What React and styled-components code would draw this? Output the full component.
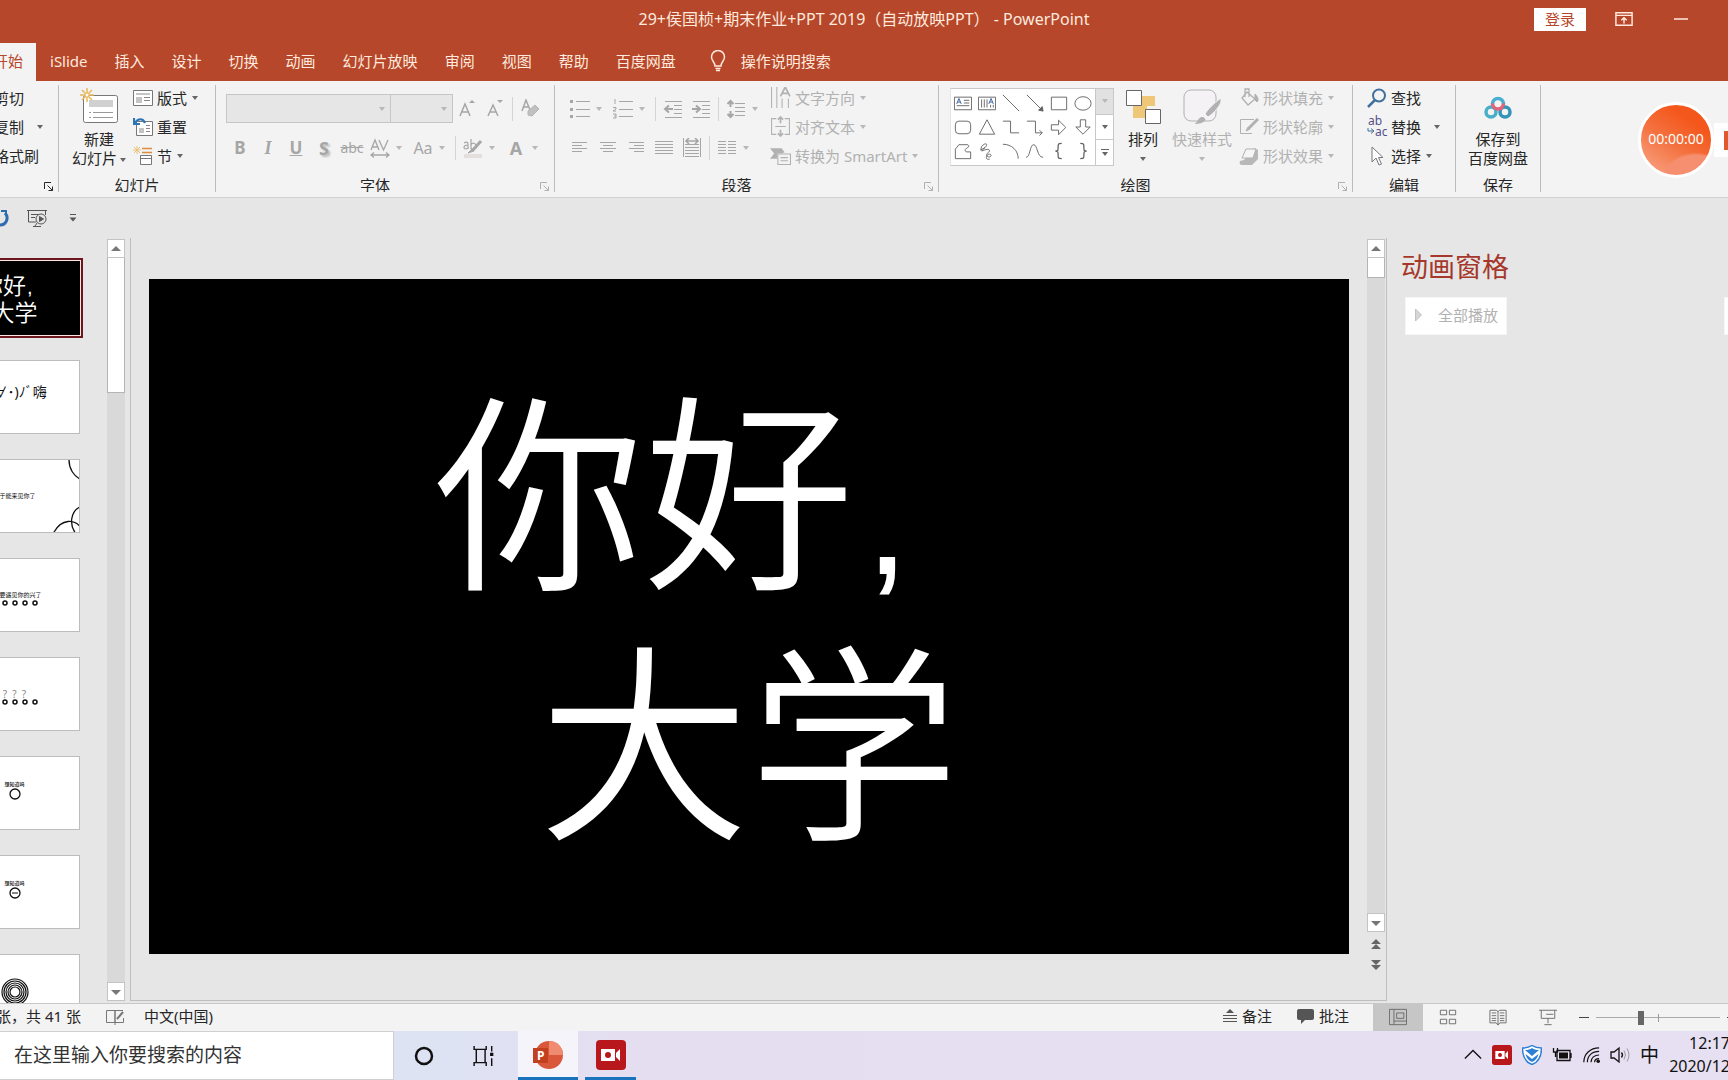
import React, { useState } from 'react'
import styled, { createGlobalStyle, css } from 'styled-components'

const GlobalStyle = createGlobalStyle`
  * { box-sizing: border-box; }
  body { margin: 0; overflow: hidden; }
  body, button, input, select {
    font-family: 'Noto Sans', 'Noto Sans CJK SC', sans-serif;
    font-size: 15px;
    line-height: 20px;
    color: #262626;
  }
  button {
    border: 0;
    padding: 0;
    background: none;
    white-space: nowrap;
  }
  button:disabled { color: #b1b1b1; }
  ul, h1, h2, p { margin: 0; padding: 0; }
  h1, h2 { font-weight: normal; }
  li { list-style: none; }
`

const Icon = styled.svg.attrs(({ viewBox }) => ({ viewBox: viewBox || '0 0 20 20', 'aria-hidden': true }))`
  flex: none;
  width: ${({ $w }) => $w || 20}px;
  height: ${({ $h, $w }) => $h || $w || 20}px;
  fill: none;
  stroke: currentColor;
  display: block;
`

const Caret = styled.span`
  flex: none;
  display: inline-block;
  vertical-align: middle;
  border: 3px solid transparent;
  border-top: 4px solid ${({ $pale }) => $pale ? '#b8b8b8' : '#666'};
  border-bottom: 0;
`

const LowCaret = styled(Caret)`
  margin-top: 8px;
`

/* ---------- window frame ---------- */

const Window = styled.div`
  height: 100vh;
  display: flex;
  flex-direction: column;
  overflow: hidden;
  position: relative;
  background: #e6e6e6;
`

const Header = styled.header`
  flex: none;
  background: #b7472a;
  color: #fdeadf;
`

const TitleBar = styled.div`
  display: grid;
  grid-template-columns: 1fr auto 1fr;
  align-items: center;
  height: 38px;
  h1 {
    grid-column: 2;
    font-size: 16px;
    white-space: pre;
  }
`

const WindowButtons = styled.div`
  display: flex;
  align-items: center;
  justify-content: flex-end;
  padding-right: 40px;
  button { color: #fdeadf; }
`

const LoginButton = styled.button`
  && { color: #b7472a; }
  background: #fff;
  height: 23px;
  padding: 0 11px;
  margin-right: 29px;
`

const Minimize = styled.button`
  margin-left: 41px;
`

const Tabs = styled.nav`
  display: flex;
  gap: 1px;
  height: 43px;
  padding-top: 5px;
  margin-left: -20px;
`

const Tab = styled.button`
  display: flex;
  align-items: center;
  padding: 0 13px 2px;
  color: ${({ $active }) => $active ? '#b7472a' : '#fdeadf'};
  background: ${({ $active }) => $active ? '#f3f3f3' : 'none'};
`

const TellMe = styled(Tab)`
  margin-left: 7px;
  gap: 15px;
`

const Ribbon = styled.div`
  flex: none;
  display: flex;
  padding: 4px 0 5px;
  background: #f3f3f3;
  border-bottom: 1px solid #d0d0d0;
`

const GroupBox = styled.section`
  flex: none;
  display: flex;
  flex-direction: column;
  width: ${({ $width }) => $width}px;
  border-right: 1px solid #bdbdbd;
`

const GroupBody = styled.div`
  display: flex;
  height: 87px;
  padding-left: ${({ $pad }) => $pad || 0}px;
  justify-content: ${({ $justify }) => $justify || 'flex-start'};
`

const GroupFooter = styled.div`
  display: flex;
  height: 20px;
  overflow: hidden;
  h2 {
    flex: 1;
    font-size: 15px;
    line-height: 26px;
    text-align: center;
  }
  button { width: 20px; padding: 10px 0 0 6px; }
`

const Stack = styled.div`
  display: flex;
  flex-direction: column;
  align-items: flex-start;
  margin-left: ${({ $ml }) => $ml || 0}px;
`

const SmallButton = styled.button`
  display: flex;
  align-items: center;
  gap: 4px;
  height: 29px;
  padding-bottom: 4px;
  ${Caret} { margin-left: ${({ $far }) => $far ? 9 : 1}px; }
`

const BigButton = styled.button`
  display: flex;
  flex-direction: column;
  align-items: center;
  min-width: 58px;
  height: 87px;
  padding-top: 3px;
  line-height: 19px;
  > svg { margin-bottom: 6px; }
  span > ${Caret} { margin-left: 3px; }
`

const ToolRow = styled.div`
  display: flex;
  align-items: center;
  height: 39px;
  &:first-child { margin-top: 4px; }
`

const Tool = styled.button`
  flex: none;
  display: flex;
  align-items: center;
  justify-content: center;
  width: 28px;
  height: 28px;
  font-size: ${({ $size }) => $size || 17}px;
  font-weight: ${({ $bold }) => $bold ? 700 : 400};
  &:disabled { color: #a6a6a6; }
  ${({ $split }) => $split && css`
    width: 43px;
    padding-right: 5px;
    justify-content: flex-start;
    > :first-child { width: 28px; text-align: center; }
    ${Caret} { margin-left: 2px; }
  `}
`

const ToolIconBox = styled.span`
  display: flex;
  justify-content: center;
`

const Rule = styled.span`
  width: 1px;
  height: 24px;
  margin: 0 3px;
  background: #d4d4d4;
`

const Combo = styled.div`
  display: flex;
  align-items: center;
  width: ${({ $width }) => $width}px;
  height: 29px;
  padding-right: 5px;
  background: #e6e6e6;
  border: 1px solid #c6c6c6;
  & + & { border-left-width: 0; }
  select {
    flex: 1;
    min-width: 0;
    appearance: none;
    border: 0;
    background: none;
  }
`

const Italic = styled.em`
  font-family: 'Liberation Serif', serif;
  font-weight: 700;
  font-size: 18px;
`

const Shadowed = styled.span`
  text-shadow: 2px 2px 2px #bbb;
`

const ClipStack = styled(Stack)`
  width: 39px;
  align-items: flex-end;
  ${SmallButton}:not(:last-child) { margin-right: 15px; }
  ${SmallButton}:nth-child(2) { margin-right: -4px; }
`

const ReplaceIcon = styled(Icon)`
  overflow: visible;
  text {
    font-size: 12px;
    fill: #55508a;
    stroke: none;
  }
`

/* ---------- shapes gallery ---------- */

const Gallery = styled.div`
  display: flex;
  align-self: flex-start;
  margin-top: 3px;
  height: 78px;
  background: #fff;
  border: 1px solid #c8c8c8;
  border-left-color: #e4e4e4;
`

const Shapes = styled.div`
  display: grid;
  grid-template-columns: repeat(6, 24px);
  grid-auto-rows: 24px;
  padding-top: 2px;
  color: #5f5f5f;
  button {
    display: grid;
    place-items: center;
    color: inherit;
  }
`

const GalleryScroll = styled.div`
  display: flex;
  flex-direction: column;
  width: 18px;
  border-left: 1px solid #c8c8c8;
  button {
    flex: 1;
    display: flex;
    flex-direction: column;
    align-items: center;
    justify-content: center;
    gap: 2px;
  }
  button:first-child { background: #e1e1e1; }
  button + button { border-top: 1px solid #c8c8c8; }
  i { width: 8px; height: 1px; background: #666; }
`

/* ---------- recorder widget floating over the ribbon ---------- */

const Recorder = styled.div`
  position: absolute;
  top: 102px;
  right: 0;
  display: flex;
  align-items: center;
`

const RecorderTime = styled.button`
  width: 76px;
  height: 76px;
  border: 3px solid #fff;
  border-radius: 50%;
  padding-bottom: 3px;
  color: #fff;
  font-size: 14px;
  background:
    radial-gradient(circle at 78% 125%, #f68f70 0 36%, transparent 39%),
    linear-gradient(215deg, #f4571c 25%, #f4713f 55%, #f9a98c 100%);
`

const RecorderStop = styled.button`
  display: flex;
  align-items: center;
  justify-content: flex-end;
  width: 14px;
  height: 34px;
  background: #fff;
  &::after {
    content: '';
    width: 4px;
    height: 19px;
    background: #e0582c;
  }
`

/* ---------- work area ---------- */

const QuickAccess = styled.div`
  flex: none;
  display: flex;
  align-items: center;
  gap: 18px;
  height: 40px;
  margin-left: -11px;
  color: #555;
  button { color: inherit; }
`

const Main = styled.main`
  flex: 1;
  min-height: 0;
  display: flex;
`

const ThumbPane = styled.ul`
  flex: none;
  width: 107px;
  display: flex;
  flex-direction: column;
  align-items: flex-end;
  gap: 25px;
  padding: 23px 27px 0 0;
  overflow: hidden;
`

const Thumb = styled.button`
  position: relative;
  display: flex;
  flex-direction: column;
  align-items: center;
  justify-content: center;
  width: 131px;
  height: 74px;
  overflow: hidden;
  background: #fff;
  border: 1px solid #bdbdbd;
  color: #111;
  font-size: ${({ $size }) => $size || 6}px;
  line-height: ${({ $size }) => $size ? $size + 4 : 8}px;
  padding-bottom: ${({ $lift }) => $lift || 0}px;
  ${({ $selected }) => $selected && css`
    border: 0;
    color: #fff;
    background: #000;
    font-family: 'Noto Sans CJK SC', sans-serif;
    font-weight: 350;
    box-shadow: 0 0 0 1px #fbe4e4, 0 0 0 3px #6d161d;
  `}
`

const CaptionThumb = styled(Thumb)`
  font-size: 5px;
  font-weight: 500;
  padding-bottom: 18px;
`

const ThumbArt = styled(Icon)`
  position: absolute;
  inset: 0;
`

const Questions = styled.span`
  font-size: 10px;
  line-height: 12px;
  color: #888;
  white-space: pre;
`

const ScrollBar = styled.div`
  flex: none;
  display: flex;
  flex-direction: column;
  width: 18px;
  margin: 1px 0 ${({ $bottom }) => $bottom}px;
  background: #d9d9d9;
  color: #777;
`

const ScrollArrow = styled.button`
  flex: none;
  display: grid;
  place-items: center;
  height: 19px;
  background: #fff;
  border: 1px solid #c4c4c4;
  color: inherit;
`

const ScrollThumb = styled.div`
  height: ${({ $height }) => $height}px;
  margin-bottom: auto;
  background: #fff;
  border: 1px solid #b4b4b4;
  border-top: 0;
`

const Editor = styled.div`
  flex: 1;
  min-width: 0;
  display: flex;
  margin: 0 0 2px 5px;
  border: solid #bebebe;
  border-width: 0 1px 1px;
`

const Canvas = styled.div`
  flex: 1;
  min-width: 0;
  padding: 41px 18px 0;
`

const Slide = styled.div`
  display: flex;
  align-items: center;
  justify-content: center;
  aspect-ratio: 16 / 9;
  padding-bottom: 20px;
  background: #000;
  color: #fff;
  font-family: 'Noto Sans CJK SC', sans-serif;
  font-size: 210px;
  font-weight: 350;
  line-height: 250px;
  text-align: center;
  white-space: nowrap;
`

// full-width cell with a narrow straight comma in it
const Comma = styled.span`
  display: inline-block;
  width: ${({ $cell }) => $cell}px;
  padding-left: ${({ $lead }) => $lead || 0}px;
  font-family: 'Liberation Sans', sans-serif;
  font-size: ${({ $size }) => $size}px;
  line-height: 1;
  text-align: left;
`

const SlideNav = styled.div`
  flex: none;
  display: flex;
  flex-direction: column;
  margin-right: 1px;
  > ${ScrollBar} { flex: 1; }
`

const SlideStep = styled.div`
  display: flex;
  flex-direction: column;
  align-items: center;
  gap: 3px;
  padding-bottom: 26px;
  button { height: 18px; color: #666; }
`

const AnimationPane = styled.aside`
  flex: none;
  width: 341px;
  padding: 11px 0 0 14px;
  h2 {
    font-size: 27px;
    line-height: 36px;
    color: #a5382a;
  }
`

const PaneButtons = styled.div`
  display: flex;
  justify-content: space-between;
  margin: 12px -36px 0 4px;
`

const PaneButton = styled.button`
  display: flex;
  align-items: center;
  gap: 14px;
  min-width: 40px;
  height: 38px;
  padding: 0 8px 2px;
  background: #fff;
  border: 1px solid #f6f6f6;
`

/* ---------- status bar ---------- */

const StatusBar = styled.footer`
  flex: none;
  display: flex;
  align-items: center;
  height: 28px;
  overflow: hidden;
  background: #f3f3f3;
  border-top: 1px solid #c8c8c8;
  white-space: nowrap;
`

const StatusSide = styled.div`
  display: flex;
  align-items: center;
  padding-bottom: 3px;
  & + & {
    margin-left: auto;
    margin-right: 24px;
  }
`

const SlideCount = styled.p`
  width: 81px;
  display: flex;
  justify-content: flex-end;
  margin-right: 24px;
`

const StatusButton = styled.button`
  display: flex;
  align-items: center;
  gap: 5px;
  margin-left: ${({ $ml }) => $ml || 0}px;
`

const ViewButton = styled.button`
  display: grid;
  place-items: center;
  width: 50px;
  height: 28px;
  padding-bottom: 1px;
  color: #666;
  background: ${({ $active }) => $active ? '#c6c6c6' : 'none'};
`

const Zoom = styled.div`
  display: flex;
  align-items: center;
  gap: 7px;
  margin: 0 -9px 0 6px;
  button { width: 10px; color: #444; }
  input {
    appearance: none;
    width: 124px;
    height: 14px;
    margin: 0;
    background:
      linear-gradient(#999, #999) 50% 50% / 1px 8px no-repeat,
      linear-gradient(#aaa, #aaa) 0 50% / 100% 1px no-repeat;
  }
  input::-webkit-slider-thumb {
    appearance: none;
    width: 6px;
    height: 14px;
    background: #666;
  }
`

/* ---------- taskbar ---------- */

const TaskBar = styled.div`
  flex: none;
  display: flex;
  height: 49px;
  overflow: hidden;
  background: linear-gradient(90deg, #dde3f3 25%, #e5def1 36%, #e6e0f2);
`

const SearchBox = styled.input`
  width: 394px;
  padding: 0 14px 2px;
  border: 1px solid #cfcfcf;
  border-left: 0;
  background: #fff;
  font-size: 19px;
  &::placeholder { color: #333; opacity: 1; }
`

const TaskButton = styled.button`
  display: grid;
  place-items: center;
  width: ${({ $width }) => $width || 60}px;
  color: #111;
  background: ${({ $active }) => $active ? '#f5f4fa' : 'none'};
  border-bottom: ${({ $open }) => $open ? '3px solid #1a74bd' : '0'};
  padding-top: ${({ $open }) => $open ? 1 : 0}px;
  margin-right: ${({ $mr }) => $mr || 0}px;
`

const Tray = styled.div`
  flex: 1;
  display: flex;
  align-items: center;
  justify-content: flex-end;
  gap: 10px;
  padding-bottom: 2px;
  color: #111;
  span { font-size: 19px; }
`

const Clock = styled.time`
  font-size: 16px;
  line-height: 23px;
  text-align: right;
  margin-right: -2px;
`

const Launcher = ({ off }) => (
  <button aria-label="对话框启动器" disabled={off}>
    <Icon $w={10} viewBox="0 0 10 10">
      <path d="M.5 7V.5H7M3.500 3.500l5 5M8.500 4.500v4h-4" />
    </Icon>
  </button>
)

const Group = ({ title, width, pad, justify, launcher, children }) => (
  <GroupBox $width={width}>
    <GroupBody $pad={pad} $justify={justify}>{children}</GroupBody>
    <GroupFooter>
      <h2>{title}</h2>
      {launcher && <Launcher off={launcher === 'off'} />}
    </GroupFooter>
  </GroupBox>
)

function ToolIcon({ label, split, children }) {
  return (
    <Tool disabled aria-label={label} $split={split}>
      <ToolIconBox><Icon>{children}</Icon></ToolIconBox>
      {split && <Caret $pale />}
    </Tool>
  )
}

const shapes = [
  ['文本框', <><path d="M.5 3.500h19v14H.5zM11 7h6M11 10h6M3 13h14" /><path d="M3 11l2.500-6L8 11M4 9h3" stroke="#2b579a" /></>],
  ['竖排文本框', <><path d="M.5 3.500h19v14H.5zM4 6v9M7 6v9M10 6v9M14 12v3M17 12v3" /><path d="M12 11l2.500-6 2.500 6M13 9h3" stroke="#2b579a" /></>],
  ['直线', <path d="M1 1l18 18" />],
  ['箭头', <><path d="M1 1l17 17" /><path d="M19 19l-5-1 4-4z" fill="currentColor" /></>],
  ['矩形', <path d="M1.500 3.500h17v14h-17z" />],
  ['椭圆', <ellipse cx="10" cy="10.500" rx="9" ry="7.500" />],
  ['圆角矩形', <rect x="1.500" y="3.500" width="17" height="14" rx="4" />],
  ['三角形', <path d="M10 2l8.500 16h-17z" />],
  ['肘形连接符', <path d="M1 3.500h8.500v13H19" />],
  ['肘形箭头', <path d="M1 3.500h9.500v13H18M15 13.500l3 3-3 3" />],
  ['右箭头', <path d="M1.500 7.500h8v-5l8 8-8 8v-5h-8z" />],
  ['下箭头', <path d="M7 2h6v8h5l-8 8-8-8h5z" />],
  ['任意多边形', <path d="M1.500 18.500V8l4-5h9c3 0 2 3-.5 4s-2 4 .5 4h4v7.500z" />],
  ['自由曲线', <path d="M4 5c4-5 8-3 4 1s-6 5-1 3 8 0 4 3 1 6 3 4-2-4-4-1 0 5 3 4M4 5l-1 4 5-3" />],
  ['弧形', <path d="M1 2.500c10 0 17 7 17 16" />],
  ['曲线', <path d="M0 17C5 17 4 3 8.500 3S12 17 19 17" />],
  ['左大括号', <path strokeWidth="1.400" d="M13 1.500c-4 0-4 1-4 4.500s0 4-3 4c3 0 3 1 3 4.500s0 4 4 4" />],
  ['右大括号', <path strokeWidth="1.400" d="M7 1.500c4 0 4 1 4 4.500s0 4 3 4c-3 0-3 1-3 4.500s0 4-4 4" />],
]

const tabs = ['开始', 'iSlide', '插入', '设计', '切换', '动画', '幻灯片放映', '审阅', '视图', '帮助', '百度网盘']

function TopBar() {
  const [active, setActive] = useState('开始')
  return (
    <Header>
      <TitleBar>
        <h1>29+侯国桢+期末作业+PPT 2019（自动放映PPT） - PowerPoint</h1>
        <WindowButtons>
          <LoginButton>登录</LoginButton>
          <button aria-label="功能区显示选项">
            <Icon $w={18}>
              <path strokeWidth="1.600" d="M1 3h18v14H1zM1 6h18M10 15V9M7 11.500l3-3 3 3" />
            </Icon>
          </button>
          <Minimize aria-label="最小化">
            <Icon $w={14} viewBox="0 0 14 14"><path strokeWidth="1.500" d="M0 7h14" /></Icon>
          </Minimize>
        </WindowButtons>
      </TitleBar>
      <Tabs>
        {tabs.map(t => (
          <Tab key={t} $active={t === active} onClick={() => setActive(t)}>{t}</Tab>
        ))}
        <TellMe>
          <Icon $w={16} $h={22} viewBox="0 0 16 22">
            <path strokeWidth="1.500" d="M5 16c0-4-3.500-5-3.500-9a6.500 6.500 0 0 1 13 0c0 4-3.500 5-3.500 9zM5.500 18.500h5M6 20.500h4" />
          </Icon>
          操作说明搜索
        </TellMe>
      </Tabs>
    </Header>
  )
}

function FontGroup() {
  return (
    <Group title="字体" width={339} pad={10} launcher="off">
      <Stack>
        <ToolRow>
          <Combo $width={165}><select disabled aria-label="字体" /><Caret $pale /></Combo>
          <Combo $width={62}><select disabled aria-label="字号" /><Caret $pale /></Combo>
          <ToolIcon label="增大字号">
            <path strokeWidth="1.500" d="M3 17l5-12 5 12M5 13h6" /><path d="M12 4l3-3 3 3z" fill="currentColor" stroke="none" />
          </ToolIcon>
          <ToolIcon label="减小字号">
            <path strokeWidth="1.500" d="M3 17l5-11 5 11M5 13h6" /><path d="M12 1l3 3 3-3z" fill="currentColor" stroke="none" />
          </ToolIcon>
          <Rule />
          <ToolIcon label="清除格式">
            <path strokeWidth="1.500" d="M2 12L6 1l4 10M3 8h6" />
            <path d="M8 12l7-6 4 4-7 7-4-1z" fill="#c0c0c0" stroke="#b4b4b4" />
          </ToolIcon>
        </ToolRow>
        <ToolRow>
          <Tool disabled $bold>B</Tool>
          <Tool disabled><Italic>I</Italic></Tool>
          <Tool disabled $bold><u>U</u></Tool>
          <Tool disabled $bold $size={18}><Shadowed>S</Shadowed></Tool>
          <Tool disabled $size={14}><s>abc</s></Tool>
          <ToolIcon label="字符间距" split>
            <path strokeWidth="1.300" d="M1 12l4-10 4 10M2.500 9h5M9 2l4.500 10L18 2M1 17h18M4 14.500L1 17l3 2.500M16 14.500l3 2.500-3 2.500" />
          </ToolIcon>
          <Tool disabled $split $size={16}><span>Aa</span><Caret $pale /></Tool>
          <Rule />
          <ToolIcon label="突出显示" split>
            <path strokeWidth="1.200" d="M1 5c3-2 4 0 4 1v5M5 7c-5 0-5 4-2 4l2-1M8 1v10M8 7c1-3 5-2 5 1s-4 4-5 2" />
            <path strokeWidth="3" d="M18 3l-8 9" /><path d="M5 15l4-4 2 2z" fill="currentColor" />
            <path stroke="#e4dedc" strokeWidth="4" d="M1 18h18" />
          </ToolIcon>
          <Tool disabled $bold $split $size={18}><span>A</span><Caret $pale /></Tool>
        </ToolRow>
      </Stack>
    </Group>
  )
}

function ParagraphGroup() {
  return (
    <Group title="段落" width={384} pad={11} launcher="off">
      <Stack>
        <ToolRow>
          <ToolIcon label="项目符号" split>
            <path d="M6 2.500h14M6 10.500h14M6 17.500h14" /><path strokeWidth="3" d="M0 2.500h3M0 10.500h3M0 17.500h3" />
          </ToolIcon>
          <ToolIcon label="编号" split>
            <path d="M6 2.500h14M6 10.500h14M6 17.500h14M2 0v5M0 8.500h3v1.500L0 12h3M0 15h3v4H0M1 17h2" />
          </ToolIcon>
          <Rule />
          <ToolIcon label="减少缩进">
            <path d="M2 2.500h17M11 6.500h8M11 10.500h8M11 14.500h8M2 18.500h17" /><path strokeWidth="2" d="M10 10H3M6 6.500L2 10l4 3.500" />
          </ToolIcon>
          <ToolIcon label="增加缩进">
            <path d="M2 2.500h17M11 6.500h8M11 10.500h8M11 14.500h8M2 18.500h17" /><path strokeWidth="2" d="M1 10h7M5 6.500L9 10l-4 3.500" />
          </ToolIcon>
          <Rule />
          <ToolIcon label="行距" split>
            <path d="M9 4.500h10M9 8.500h10M9 12.500h10M9 16.500h10" />
            <path strokeWidth="2" d="M4.500 8V2M1.500 5l3-3 3 3M4.500 12v6M1.500 15l3 3 3-3" />
          </ToolIcon>
        </ToolRow>
        <ToolRow>
          <ToolIcon label="左对齐"><path d="M2 4.500h15M2 7.500h10M2 10.500h15M2 13.500h10" /></ToolIcon>
          <ToolIcon label="居中"><path d="M2 4.500h16M5 7.500h10M2 10.500h16M5 13.500h10" /></ToolIcon>
          <ToolIcon label="右对齐"><path d="M3 4.500h15M8 7.500h10M3 10.500h15M8 13.500h10" /></ToolIcon>
          <ToolIcon label="两端对齐"><path d="M1 3.500h18M1 6.500h18M1 9.500h18M1 12.500h18M1 15.500h18" /></ToolIcon>
          <ToolIcon label="分散对齐">
            <path d="M1.500 0v19M18.500 0v19M3 6.500h14M3 9.500h14M3 12.500h14M3 15.500h14M3 18.500h14" />
            <path strokeWidth="1.600" d="M4 3h12M7 0L4 3l3 3M13 0l3 3-3 3" />
          </ToolIcon>
          <Rule />
          <ToolIcon label="分栏" split>
            <path d="M1 3.500h8M1 6.500h8M1 9.500h8M1 12.500h8M1 15.500h8M11 3.500h8M11 6.500h8M11 9.500h8M11 12.500h8M11 15.500h8" />
          </ToolIcon>
        </ToolRow>
      </Stack>
      <Stack $ml={5}>
        <SmallButton disabled>
          <Icon $w={21}>
            <path d="M1.500 0v20M6.500 0v20M11.500 11v9M17.500 11v9" /><path strokeWidth="1.600" d="M10 9l4.500-9L19 9M12 6h5" />
          </Icon>
          文字方向<Caret $pale />
        </SmallButton>
        <SmallButton disabled>
          <Icon $w={21}>
            <path d="M6 2.500H1.500v15H6M14 2.500h4.500v15H14M5 10h10" />
            <path strokeWidth="1.600" d="M10 1v6M7.500 3.500L10 1l2.500 2.500M10 13v6M7.500 16.500L10 19l2.500-2.500" />
          </Icon>
          对齐文本<Caret $pale />
        </SmallButton>
        <SmallButton disabled>
          <Icon $w={21}>
            <path d="M0 3h11l3 4-3 1H7v5H0l4-5z" fill="#b1b1b1" stroke="none" />
            <path d="M7.500 8.500h12v10h-12zM10 12h7M10 15h7" />
          </Icon>
          转换为 SmartArt<Caret $pale />
        </SmallButton>
      </Stack>
    </Group>
  )
}

function DrawingGroup() {
  return (
    <Group title="绘图" width={414} pad={11} launcher="off">
      <Gallery>
        <Shapes>
          {shapes.map(([name, art]) => (
            <button key={name} aria-label={name}><Icon $w={18}>{art}</Icon></button>
          ))}
        </Shapes>
        <GalleryScroll>
          <button aria-label="向上" disabled><Caret $pale /></button>
          <button aria-label="向下"><Caret /></button>
          <button aria-label="其他"><i /><Caret /></button>
        </GalleryScroll>
      </Gallery>
      <BigButton>
        <Icon $w={36} viewBox="0 0 36 36">
          <path d="M16 8h14v10h-8v12H8V18h8z" fill="#efc778" stroke="none" />
          <path d="M1.500 2.500h15v15h-15zM20.500 21.500h15v14h-15z" fill="#fff" stroke="#666" />
        </Icon>
        排列
        <LowCaret />
      </BigButton>
      <BigButton disabled>
        <Icon $w={38} $h={36} viewBox="0 0 38 36">
          <rect x="1" y="2" width="32" height="31" rx="7" fill="#f5f2f5" />
          <path d="M38 10c-8 6-13 11-16 16l3 3c6-4 11-10 13-15z" fill="#b1b1b1" stroke="#f3f3f3" />
          <path d="M11 36c4-1 4-8 9-7 5 2 2 7-9 7z" fill="#b1b1b1" stroke="none" />
        </Icon>
        快速样式
        <LowCaret $pale />
      </BigButton>
      <Stack $ml={7}>
        <SmallButton disabled>
          <Icon>
            <path strokeWidth="1.300" d="M8 4l8 7-7 6-6-7zM6 9V1h4v8" /><path d="M16 6c3 3 4 6 2 8l-2-2z" fill="currentColor" />
          </Icon>
          形状填充<Caret $pale />
        </SmallButton>
        <SmallButton disabled>
          <Icon><path d="M15 2.500H1.500v14H13" /><path strokeWidth="3" d="M19 2l-9 9" /><path d="M7 14l2-4 2 2z" fill="currentColor" /></Icon>
          形状轮廓<Caret $pale />
        </SmallButton>
        <SmallButton disabled>
          <Icon>
            <path d="M5 14l10-12 4 2v9l-6 6H3c-2 0-3-2-2-4z" fill="#b8b8b8" stroke="none" />
            <path d="M7 3h10l-3 9H3z" fill="#f5f5f5" stroke="#b1b1b1" />
          </Icon>
          形状效果<Caret $pale />
        </SmallButton>
      </Stack>
    </Group>
  )
}

function RibbonBar() {
  return (
    <Ribbon>
      <Group title="" width={59} launcher="on">
        <ClipStack>
          <SmallButton>剪切</SmallButton>
          <SmallButton $far>复制<Caret /></SmallButton>
          <SmallButton>格式刷</SmallButton>
        </ClipStack>
      </Group>
      <Group title="幻灯片" width={157} pad={11}>
        <BigButton>
          <Icon $w={38} $h={36} viewBox="0 0 38 36">
            <rect x="3.500" y="7.500" width="34" height="27" rx="2" fill="#fff" stroke="#777" />
            <path d="M9 12h24v7H9z" fill="#d0d0d0" stroke="none" />
            <path d="M13 24.500h20M13 29.500h20M9 24.500h2M9 29.500h2" stroke="#999" />
            <path d="M7 0v14M0 7h14M2 2l10 10M12 2L2 12" stroke="#e9b85c" strokeWidth="1.500" />
            <circle cx="7" cy="7" r="2" fill="#fff" stroke="#e9b85c" />
          </Icon>
          新建
          <span>幻灯片<Caret /></span>
        </BigButton>
        <Stack $ml={5}>
          <SmallButton>
            <Icon>
              <path d="M.5 2.500h19v15H.5z" fill="#fff" stroke="#777" />
              <path d="M3 5h14v2H3zM3 9h6v6H3z" fill="#c4c4c4" stroke="none" /><path d="M11 9.500h6M11 12.500h6" stroke="#888" />
            </Icon>
            版式<Caret />
          </SmallButton>
          <SmallButton>
            <Icon>
              <path d="M3.500 4.500h16v14h-16z" fill="#fff" stroke="#777" />
              <path d="M6 11h5v5H6z" fill="#c4c4c4" stroke="none" /><path d="M13 8.500h4M13 11.500h4M13 14.500h4" stroke="#888" />
              <path d="M12 6C10 1 5 1 2 6M1 1v6h6" stroke="#2e75b6" strokeWidth="2.200" />
            </Icon>
            重置
          </SmallButton>
          <SmallButton>
            <Icon>
              <path d="M9 2.500h10M9 6.500h10" stroke="#e08a3c" strokeWidth="1.500" />
              <path d="M7.500 9.500h11v9h-11zM7.500 12.500h11" fill="#fff" stroke="#777" />
              <path d="M4 0v8M0 4h8M1 1l6 6M7 1L1 7" stroke="#eac27a" />
            </Icon>
            节<Caret />
          </SmallButton>
        </Stack>
      </Group>
      <FontGroup />
      <ParagraphGroup />
      <DrawingGroup />
      <Group title="编辑" width={103} pad={14}>
        <Stack>
          <SmallButton>
            <Icon color="#41719c"><circle cx="12" cy="7.500" r="6" strokeWidth="2" /><path strokeWidth="2.500" d="M8 12l-7 7" /></Icon>
            查找
          </SmallButton>
          <SmallButton $far>
            <ReplaceIcon>
              <text x="1" y="8">ab</text><text x="8" y="19">ac</text>
              <path d="M1 11v3h6M4 11.500L7 14l-3 2.500" stroke="#41719c" />
            </ReplaceIcon>
            替换<Caret />
          </SmallButton>
          <SmallButton>
            <Icon><path d="M5 1v15l4-4 3 7 2.500-1-3-6.500H16z" fill="#fff" stroke="#777" /></Icon>
            选择<Caret />
          </SmallButton>
        </Stack>
      </Group>
      <Group title="保存" width={85} justify="center">
        <BigButton>
          <Icon $w={28} $h={36} viewBox="0 0 28 36">
            <circle cx="7" cy="24" r="5" stroke="#45b0c8" strokeWidth="3.500" />
            <circle cx="21" cy="24" r="5" stroke="#3294b8" strokeWidth="3.500" />
            <path d="M8.500 16a5.500 5.500 0 1 1 11 0" stroke="#4aaed0" strokeWidth="3.500" />
            <path d="M8.500 15.500a5.500 5.500 0 0 0 11 0" stroke="#e0647c" strokeWidth="3.500" />
          </Icon>
          保存到
          <span>百度网盘</span>
        </BigButton>
      </Group>
    </Ribbon>
  )
}

const dots = y => [55, 65, 75, 85].map(x => (
  <circle key={x} cx={x} cy={y} r="2" strokeWidth="1.500" />
))

const Art = ({ children }) => (
  <ThumbArt $w={131} $h={74} viewBox="0 0 131 74">{children}</ThumbArt>
)

function Thumbnails() {
  return (
    <ThumbPane>
      <li>
        <Thumb $selected $size={23}>
          <span>你好<Comma $cell={23} $size={20} $lead={1}>,</Comma></span>
          <span>大学</span>
        </Thumb>
      </li>
      <li><Thumb $size={14} $lift={10}>(･∀･)ﾉﾞ嗨</Thumb></li>
      <li>
        <Thumb>
          终于能来见你了
          <Art><path d="M119 0c0 9 5 16 11 19M103 74c8-16 22-16 30-4M130 47c-9 4-12 18-3 28" strokeWidth="1.300" /></Art>
        </Thumb>
      </li>
      <li><Thumb>好想要遇见你的兴了<Art>{dots(44)}</Art></Thumb></li>
      <li><Thumb><Questions>  ?  ?  ?  </Questions><Art>{dots(44)}</Art></Thumb></li>
      <li><CaptionThumb>想知道吗<Art><circle cx="65" cy="37" r="5" strokeWidth="1.300" /></Art></CaptionThumb></li>
      <li>
        <CaptionThumb>
          想知道吗
          <Art><circle cx="65" cy="37" r="5" strokeWidth="1.300" /><path d="M62 37h6" /></Art>
        </CaptionThumb>
      </li>
      <li>
        <Thumb aria-label="幻灯片 8">
          <Art>{[5, 7, 9, 11, 13].map(r => <circle key={r} cx="65" cy="37" r={r} strokeWidth="1.200" />)}</Art>
        </Thumb>
      </li>
    </ThumbPane>
  )
}

const Arrow = ({ down }) => (
  <Icon $w={10} viewBox="0 0 10 10">
    <path d={down ? 'M0 3h10L5 8z' : 'M0 7h10L5 2z'} fill="currentColor" stroke="none" />
  </Icon>
)

function Workspace() {
  return (
    <Main>
      <Thumbnails />
      <ScrollBar $bottom={2}>
        <ScrollArrow aria-label="向上滚动"><Arrow /></ScrollArrow>
        <ScrollThumb $height={135} />
        <ScrollArrow aria-label="向下滚动"><Arrow down /></ScrollArrow>
      </ScrollBar>
      <Editor>
        <Canvas>
          <Slide>
            <p>你好<Comma $cell={210} $size={160} $lead={11}>,</Comma><br />大学</p>
          </Slide>
        </Canvas>
        <SlideNav>
          <ScrollBar $bottom={3}>
            <ScrollArrow aria-label="上一屏"><Arrow /></ScrollArrow>
            <ScrollThumb $height={20} />
            <ScrollArrow aria-label="下一屏"><Arrow down /></ScrollArrow>
          </ScrollBar>
          <SlideStep>
            <button aria-label="上一张幻灯片">
              <Icon $w={10} viewBox="0 0 10 10"><path d="M0 5h10L5 0zM0 10h10L5 5z" fill="currentColor" stroke="none" /></Icon>
            </button>
            <button aria-label="下一张幻灯片">
              <Icon $w={10} viewBox="0 0 10 10"><path d="M0 0h10L5 5zM0 5h10l-5 5z" fill="currentColor" stroke="none" /></Icon>
            </button>
          </SlideStep>
        </SlideNav>
      </Editor>
      <AnimationPane>
        <h2>动画窗格</h2>
        <PaneButtons>
          <PaneButton disabled>
            <Icon $w={10} $h={14} viewBox="0 0 10 14"><path d="M1.500 1l6 6-6 6z" fill="#d6d6d6" stroke="#c2c2c2" /></Icon>
            全部播放
          </PaneButton>
          <PaneButton disabled aria-label="上移" />
        </PaneButtons>
      </AnimationPane>
    </Main>
  )
}

function Status() {
  const [zoom, setZoom] = useState(36)
  return (
    <StatusBar>
      <StatusSide>
        <SlideCount>张，共 41 张</SlideCount>
        <Icon color="#777">
          <path d="M10 4.500H1.500v12H10zM10 4.500h8M10 16.500h8.500V12M10 4v15" /><path strokeWidth="2" d="M18 6l-6 7" />
        </Icon>
        <StatusButton $ml={19}>中文(中国)</StatusButton>
      </StatusSide>
      <StatusSide>
        <StatusButton>
          <Icon $w={14} viewBox="0 0 14 14">
            <path d="M7 0l4 4H3z" fill="#555" stroke="none" /><path d="M0 6.500h14M0 9.500h14M0 12.500h14" stroke="#555" />
          </Icon>
          备注
        </StatusButton>
        <StatusButton $ml={25}>
          <Icon $w={17} $h={15} viewBox="0 0 17 15">
            <path d="M2 0h13q2 0 2 2v7q0 2-2 2H8l-4 4v-4H2q-2 0-2-2V2q0-2 2-2z" fill="#555" stroke="none" />
          </Icon>
          批注
        </StatusButton>
      </StatusSide>
      <ViewButton $active aria-label="普通视图">
        <Icon $w={18}><path d="M.5 1.500h19v17H.5zM5.500 1.500v17M8.500 5.500h8v6h-8zM5.500 14.500h14" /></Icon>
      </ViewButton>
      <ViewButton aria-label="幻灯片浏览">
        <Icon $w={18}><path d="M1.500 2.500h7v5h-7zM11.500 2.500h7v5h-7zM1.500 12.500h7v5h-7zM11.500 12.500h7v5h-7z" /></Icon>
      </ViewButton>
      <ViewButton aria-label="阅读视图">
        <Icon $w={18}>
          <path d="M1 2.500h7l2 1.500 2-1.500h7v14h-7L10 19l-2-2.500H1zM10 4v14M3 5.500h5M3 8.500h5M3 11.500h5M12 5.500h5M12 8.500h5M12 11.500h5M3 14h5M12 14h5" />
        </Icon>
      </ViewButton>
      <ViewButton aria-label="幻灯片放映">
        <Icon $w={18}><path d="M0 2.500h20M2.500 2.500v9h15v-9M10 11.500V17M6 18.500h8M8 7h8" /></Icon>
      </ViewButton>
      <Zoom>
        <button aria-label="缩小"><Icon $w={10} viewBox="0 0 10 10"><path d="M0 4.500h10" /></Icon></button>
        <input type="range" aria-label="显示比例" value={zoom} onChange={e => setZoom(e.target.value)} />
        <button aria-label="放大"><Icon $w={10} viewBox="0 0 10 10"><path d="M0 4.500h10M5 0v10" /></Icon></button>
      </Zoom>
    </StatusBar>
  )
}

const CameraArt = () => (
  <>
    <rect width="30" height="30" rx="4" fill="#b8181c" stroke="none" />
    <path d="M5 9h14v12H5zM20 13l4-4v12l-4-4z" fill="#fff" stroke="none" />
    <circle cx="12" cy="15" r="3" fill="#b8181c" stroke="none" />
  </>
)

function Taskbar() {
  return (
    <TaskBar>
      <SearchBox aria-label="搜索" placeholder="在这里输入你要搜索的内容" />
      <TaskButton aria-label="Cortana">
        <Icon $w={20}><circle cx="10" cy="10" r="8" strokeWidth="2.500" /></Icon>
      </TaskButton>
      <TaskButton $mr={4} aria-label="任务视图">
        <Icon $w={22}>
          <path strokeWidth="1.300" d="M1 1v3h11V1M1 19v-3h11v3M3 4v12M11 4v12M17 1v5M17 12v7" /><path strokeWidth="3" d="M15.500 8.500h3" />
        </Icon>
      </TaskButton>
      <TaskButton $open $active $mr={7} aria-label="PowerPoint">
        <Icon $w={30} viewBox="0 0 30 30">
          <circle cx="16" cy="15" r="14" fill="#d9573a" stroke="none" />
          <path d="M16 1a14 14 0 0 1 14 14H16z" fill="#f08b70" stroke="none" />
          <path d="M0 8h15v15H0z" fill="#c2401f" stroke="none" />
          <text x="4" y="20" fontSize="12" fontWeight="700" fill="#fff" stroke="none">P</text>
        </Icon>
      </TaskButton>
      <TaskButton $open $width={51} aria-label="录屏">
        <Icon $w={30} viewBox="0 0 30 30"><CameraArt /></Icon>
      </TaskButton>
      <Tray>
        <Icon $w={18}><path strokeWidth="1.500" d="M1 14l9-9 9 9" /></Icon>
        <Icon viewBox="0 0 30 30"><CameraArt /></Icon>
        <Icon>
          <path d="M10 .5c3 2 6 2.500 9.500 2.500C19.500 11 17 17 10 19.500 3 17 .5 11 .5 3 4 3 7 2.500 10 .5z" fill="#fff" stroke="#2d7fd6" strokeWidth="1.500" />
          <path d="M10 3c2 1.500 4 2 7 2l-7 6-7-6c3 0 5-.5 7-2zM3.500 9l6.500 5 6.500-5c-1 4-3 6.500-6.500 8-3.500-1.500-5.500-4-6.500-8z" fill="#2d7fd6" stroke="none" />
        </Icon>
        <Icon>
          <path strokeWidth="1.300" d="M5 5.500h13v10H5zM19 8v5M1.500 3v4h4V3M3.500 7v5" /><path d="M7 7.500h9v6H7z" fill="currentColor" stroke="none" />
        </Icon>
        <Icon $w={18}>
          <path d="M2 18C2 9 9 2 19 2M6 18C6 11 11 6 19 6M10 18c0-5 4-8 9-8M14 18c0-3 2-4 5-4" strokeWidth="1.300" />
          <circle cx="18" cy="17" r="2" fill="currentColor" stroke="none" />
        </Icon>
        <Icon>
          <path strokeWidth="1.300" d="M1 7h3l5-4v14l-5-4H1zM11.500 7.500q2 2.500 0 5" /><path d="M14 5.500q3 4.500 0 9M17 3.500q4 6.500 0 13" stroke="#999" />
        </Icon>
        <span>中</span>
        <Clock>12:17<br />2020/12</Clock>
      </Tray>
    </TaskBar>
  )
}

const App = () => (
  <Window>
    <GlobalStyle />
    <TopBar />
    <RibbonBar />
    <QuickAccess>
      <button aria-label="重复">
        <Icon color="#2e6cb0"><path strokeWidth="3" d="M7 4c-6 4-3 13 4 13 7 0 9-8 5-12" /><path strokeWidth="2" d="M12 3h6M17 2v6" /></Icon>
      </button>
      <button aria-label="从头开始放映">
        <Icon>
          <path d="M0 2.500h20M1.500 3v11H9M18.500 3v4M4 6.500h8M4 9.500h4M6 18.500h8M8 18l2-3" /><circle cx="14" cy="11" r="5" />
          <path d="M12.500 8.500l4 2.500-4 2.500z" fill="currentColor" />
        </Icon>
      </button>
      <button aria-label="自定义快速访问工具栏">
        <Icon $w={14} viewBox="0 0 14 14"><path d="M5 3.500h6" /><path d="M4.500 6.500h7L8 10.500z" fill="currentColor" stroke="none" /></Icon>
      </button>
    </QuickAccess>
    <Workspace />
    <Status />
    <Taskbar />
    <Recorder>
      <RecorderTime>00:00:00</RecorderTime>
      <RecorderStop aria-label="停止录制" />
    </Recorder>
  </Window>
)

export default App
